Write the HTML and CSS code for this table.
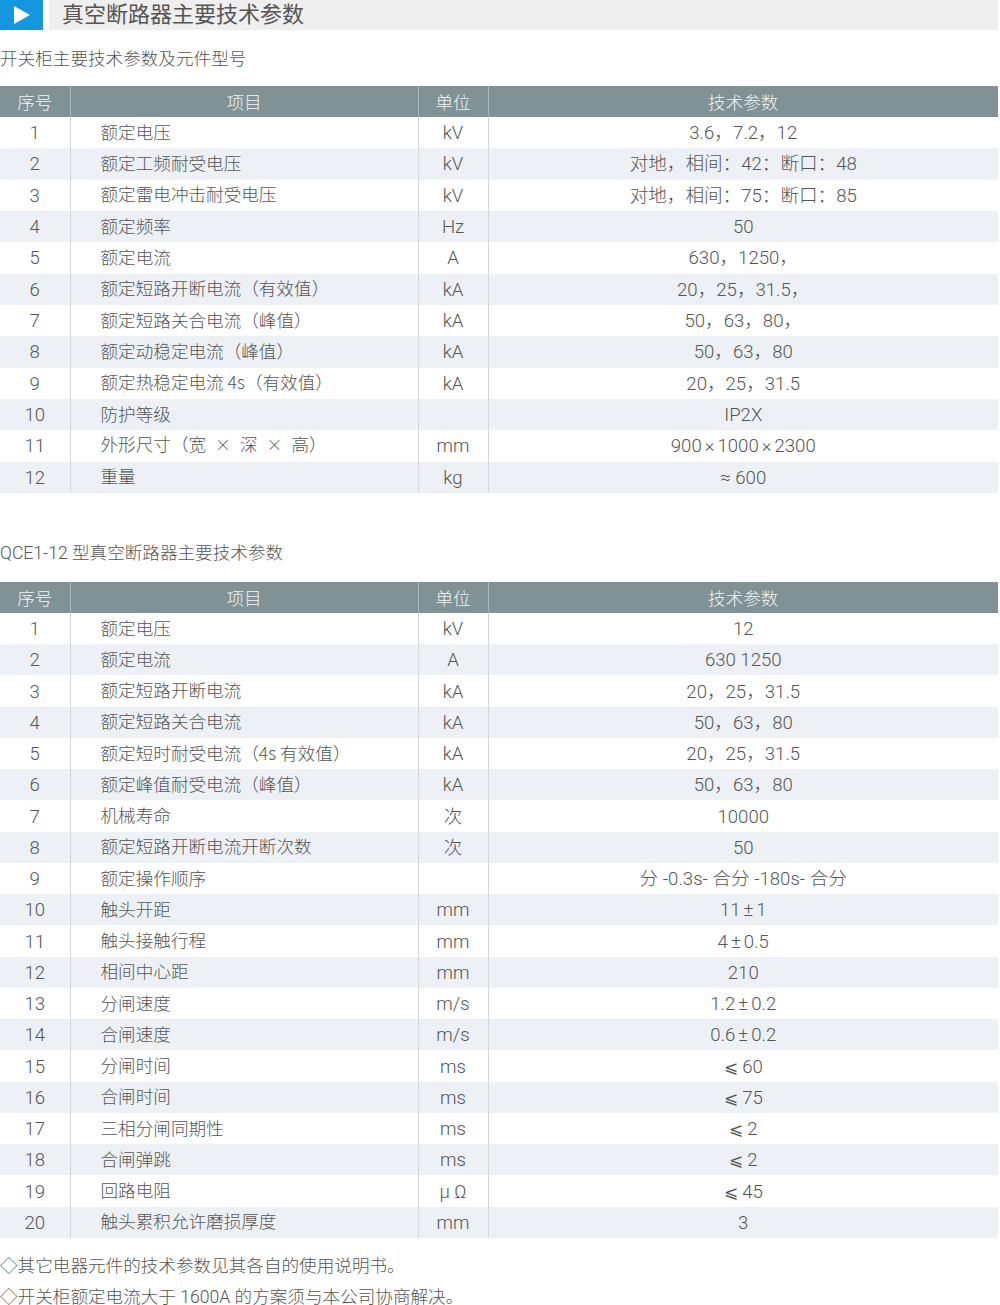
FILE: index.html
```html
<!DOCTYPE html>
<html lang="zh-CN">
<head>
<meta charset="utf-8">
<title>真空断路器主要技术参数</title>
<link rel="stylesheet" href="styles.css">
</head>
<body>
<div class="page">
  <div class="title-bar">
    <div class="title-icon">
      <svg width="18" height="18" viewBox="0 0 18 18"><polygon points="1,0 17,9 1,18" fill="#fff"/></svg>
    </div>
    <div class="title-text">真空断路器主要技术参数</div>
  </div>

  <div class="subtitle s1">开关柜主要技术参数及元件型号</div>
  <table class="spec t1">
    <colgroup><col class="c1"><col class="c2"><col class="c3"><col class="c4"></colgroup>
    <thead><tr><th>序号</th><th>项目</th><th>单位</th><th>技术参数</th></tr></thead>
    <tbody>
      <tr><td>1</td><td>额定电压</td><td>kV</td><td>3.6，7.2，12</td></tr>
      <tr><td>2</td><td>额定工频耐受电压</td><td>kV</td><td>对地，相间：42：断口：48</td></tr>
      <tr><td>3</td><td>额定雷电冲击耐受电压</td><td>kV</td><td>对地，相间：75：断口：85</td></tr>
      <tr><td>4</td><td>额定频率</td><td>Hz</td><td>50</td></tr>
      <tr><td>5</td><td>额定电流</td><td>A</td><td>630，1250，</td></tr>
      <tr><td>6</td><td>额定短路开断电流（有效值）</td><td>kA</td><td>20，25，31.5，</td></tr>
      <tr><td>7</td><td>额定短路关合电流（峰值）</td><td>kA</td><td>50，63，80，</td></tr>
      <tr><td>8</td><td>额定动稳定电流（峰值）</td><td>kA</td><td>50，63，80</td></tr>
      <tr><td>9</td><td>额定热稳定电流 4s（有效值）</td><td>kA</td><td>20，25，31.5</td></tr>
      <tr><td>10</td><td>防护等级</td><td></td><td>IP2X</td></tr>
      <tr><td>11</td><td>外形尺寸（宽<span class="x">×</span>深<span class="x">×</span>高）</td><td>mm</td><td>900<span class="sym">×</span>1000<span class="sym">×</span>2300</td></tr>
      <tr><td>12</td><td>重量</td><td>kg</td><td>≈ 600</td></tr>
    </tbody>
  </table>

  <div class="subtitle s2">QCE1-12 型真空断路器主要技术参数</div>
  <table class="spec t2">
    <colgroup><col class="c1"><col class="c2"><col class="c3"><col class="c4"></colgroup>
    <thead><tr><th>序号</th><th>项目</th><th>单位</th><th>技术参数</th></tr></thead>
    <tbody>
      <tr><td>1</td><td>额定电压</td><td>kV</td><td>12</td></tr>
      <tr><td>2</td><td>额定电流</td><td>A</td><td>630 1250</td></tr>
      <tr><td>3</td><td>额定短路开断电流</td><td>kA</td><td>20，25，31.5</td></tr>
      <tr><td>4</td><td>额定短路关合电流</td><td>kA</td><td>50，63，80</td></tr>
      <tr><td>5</td><td>额定短时耐受电流（4s 有效值）</td><td>kA</td><td>20，25，31.5</td></tr>
      <tr><td>6</td><td>额定峰值耐受电流（峰值）</td><td>kA</td><td>50，63，80</td></tr>
      <tr><td>7</td><td>机械寿命</td><td>次</td><td>10000</td></tr>
      <tr><td>8</td><td>额定短路开断电流开断次数</td><td>次</td><td>50</td></tr>
      <tr><td>9</td><td>额定操作顺序</td><td></td><td>分 -0.3s- 合分 -180s- 合分</td></tr>
      <tr><td>10</td><td>触头开距</td><td>mm</td><td>11<span class="sym">±</span>1</td></tr>
      <tr><td>11</td><td>触头接触行程</td><td>mm</td><td>4<span class="sym">±</span>0.5</td></tr>
      <tr><td>12</td><td>相间中心距</td><td>mm</td><td>210</td></tr>
      <tr><td>13</td><td>分闸速度</td><td>m/s</td><td>1.2<span class="sym">±</span>0.2</td></tr>
      <tr><td>14</td><td>合闸速度</td><td>m/s</td><td>0.6<span class="sym">±</span>0.2</td></tr>
      <tr><td>15</td><td>分闸时间</td><td>ms</td><td><span class="le">⩽</span> 60</td></tr>
      <tr><td>16</td><td>合闸时间</td><td>ms</td><td><span class="le">⩽</span> 75</td></tr>
      <tr><td>17</td><td>三相分闸同期性</td><td>ms</td><td><span class="le">⩽</span> 2</td></tr>
      <tr><td>18</td><td>合闸弹跳</td><td>ms</td><td><span class="le">⩽</span> 2</td></tr>
      <tr><td>19</td><td>回路电阻</td><td>μ Ω</td><td><span class="le">⩽</span> 45</td></tr>
      <tr><td>20</td><td>触头累积允许磨损厚度</td><td>mm</td><td>3</td></tr>
    </tbody>
  </table>

  <p class="note n1">◇其它电器元件的技术参数见其各自的使用说明书。</p>
  <p class="note n2">◇开关柜额定电流大于 1600A 的方案须与本公司协商解决。</p>
</div>
</body>
</html>
```

FILE: styles.css
```css
html, body {
  margin: 0;
  padding: 0;
  background: #fff;
}
body {
  font-family: Roboto, "Noto Sans CJK SC", "Noto Sans", sans-serif;
  font-weight: 300;
  color: #555;
}
.page {
  width: 1000px;
}
.title-bar {
  display: flex;
  height: 30px;
  gap: 6px;
}
.title-icon {
  width: 43px;
  height: 30px;
  background: #1597e0;
  display: flex;
  align-items: center;
  justify-content: flex-start;
  padding-left: 13px;
  box-sizing: border-box;
}
.title-icon svg {
  display: block;
}
.title-text {
  flex: 1;
  background: #efefef;
  font-size: 22px;
  line-height: 30px;
  padding-left: 13px;
  color: #555;
  font-weight: 400;
  margin-right: 2px;
}
.subtitle {
  font-size: 17.6px;
  line-height: 24px;
  color: #555;
}
.s1 {
  margin-top: 17px;
  margin-bottom: 15px;
}
.s2 {
  margin-top: 48px;
  margin-bottom: 17px;
}
.spec {
  width: 998px;
  border-collapse: collapse;
  table-layout: fixed;
  font-size: 17.6px;
}
.c1 { width: 70px; }
.c2 { width: 348px; }
.c3 { width: 70px; }
.c4 { width: 510px; }
.spec thead tr { height: 31px; }
.spec th {
  background: #7f9296;
  color: #f2f4f5;
  font-weight: 300;
  padding: 0;
  text-align: center;
  border-left: 1px solid #aab7ba;
}
.spec td {
  padding: 1px 0 0;
  text-align: center;
  color: #555;
  border-left: 1px solid #d3d7da;
  font-size: 18.6px;
  line-height: 22px;
}
.spec th:first-child,
.spec td:first-child {
  border-left: none;
}
.spec td:nth-child(2) {
  text-align: left;
  padding: 0 0 2px 30px;
  font-size: 17.6px;
  font-family: "Noto Sans CJK SC", Roboto, sans-serif;
  line-height: 22px;
}
.sym {
  font-size: 1em;
  padding: 0 3px;
}
.x {
  font-size: 0.9em;
  padding: 0 9px;
}
.le {
  font-family: "DejaVu Sans", sans-serif;
  font-weight: 200;
  font-size: 0.9em;
}
.t1 tbody tr { height: 31.33px; }
.t2 tbody tr { height: 31.25px; }
.spec tbody tr:nth-child(even) td {
  background: #edf1f6;
}
.note {
  margin: 0;
  font-size: 17.6px;
  line-height: 22px;
  color: #555;
}
.n1 { margin-top: 17px; }
.n2 { margin-top: 9px; }
```
